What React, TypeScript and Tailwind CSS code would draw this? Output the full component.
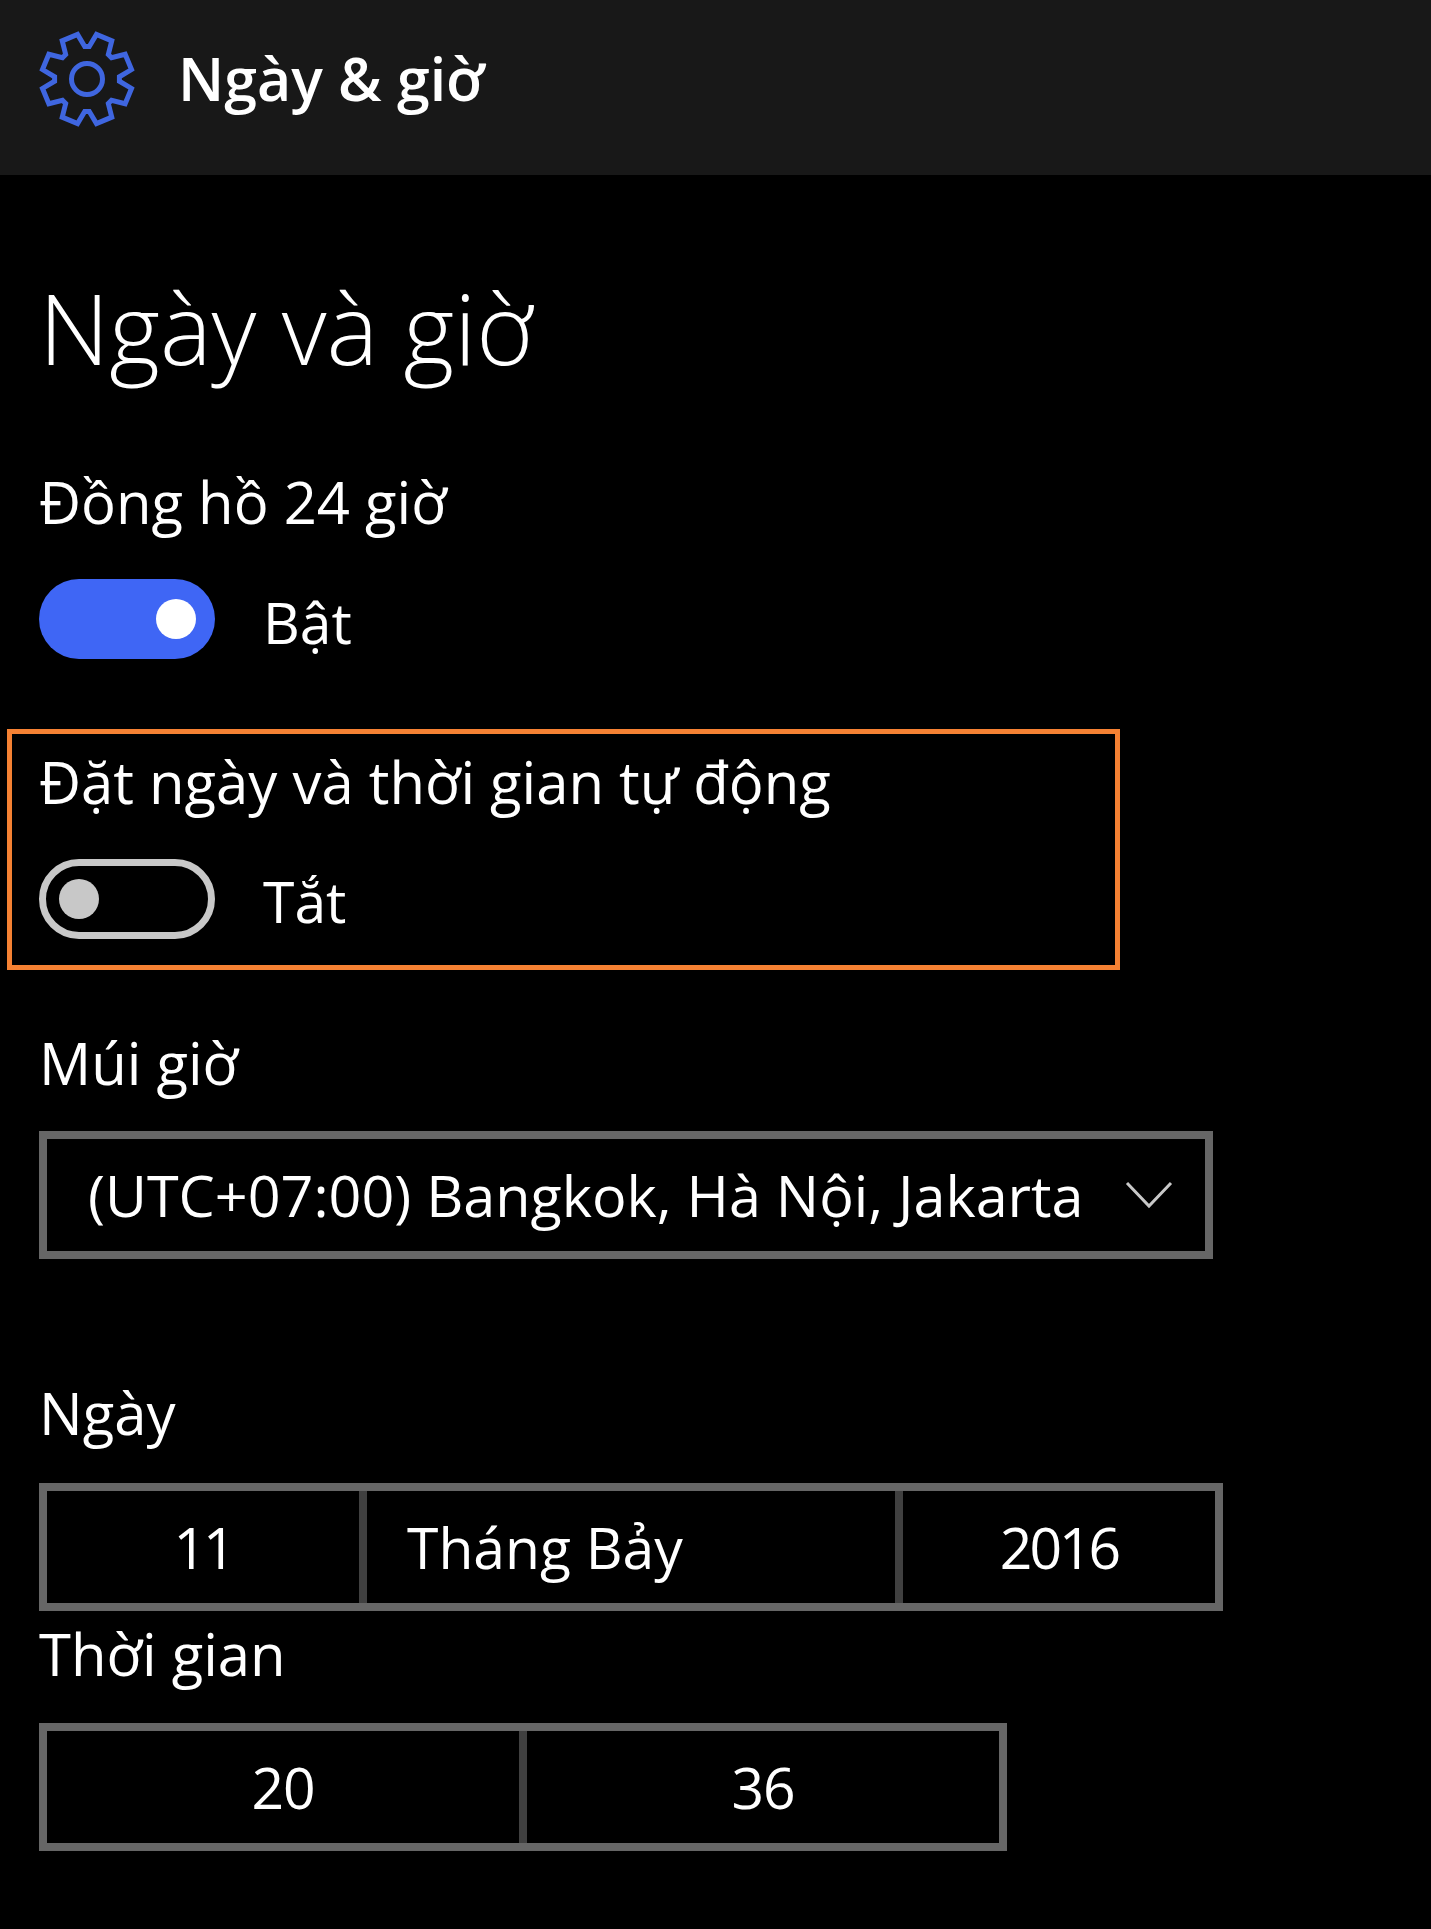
const font = "font-['Open_Sans','Noto_Sans',sans-serif]";

function Gear() {
  const cx = 48, cy = 48;
  const pts: string[] = [];
  const p = (r: number, deg: number) => {
    const t = ((deg - 90) * Math.PI) / 180;
    return `${(cx + r * Math.cos(t)).toFixed(2)},${(cy + r * Math.sin(t)).toFixed(2)}`;
  };
  for (let i = 0; i < 8; i++) {
    const c = 22.5 + i * 45;
    pts.push(p(32.5, c - 18.5));
    pts.push(p(45.5, c - 10.5));
    pts.push(p(45.5, c + 10.5));
    pts.push(p(32.5, c + 18.5));
  }
  return (
    <svg width="96" height="96" viewBox="0 0 96 96" className="shrink-0">
      <polygon points={pts.join(" ")} fill="none" stroke="#3f66e0" strokeWidth="5" />
      <circle cx="48" cy="48" r="15.5" fill="none" stroke="#3f66e0" strokeWidth="5" />
    </svg>
  );
}

function Label({ children, className = "" }: { children: React.ReactNode; className?: string }) {
  return <div className={`text-[58px] leading-[70px] text-white ${className}`}>{children}</div>;
}

function Cell({ children, className = "" }: { children: React.ReactNode; className?: string }) {
  return <div className={`flex items-center text-[57px] leading-none text-white ${className}`}>{children}</div>;
}

export default function App() {
  return (
    <div className={`min-h-[1929px] w-[1431px] bg-black ${font}`}>
      <header className="flex h-[175px] items-start bg-[#181818] pl-[39px] pt-[31px]">
        <Gear />
        <span className="ml-[43px] mt-[12px] text-[59px] font-[550] leading-[70px] text-white">Ngày &amp; giờ</span>
      </header>

      <main className="pl-[39px]">
        <h1 className="mt-[98px] text-[97.5px] font-light leading-[110px] text-white">Ngày và giờ</h1>

        <Label className="mt-[84px]">Đồng hồ 24 giờ</Label>
        <div className="mt-[42px] flex items-center">
          <div className="flex h-[80px] w-[176px] items-center justify-end rounded-full bg-[#3f66f5] pr-[19px]">
            <div className="h-[40px] w-[40px] rounded-full bg-white" />
          </div>
          <span className="ml-[48px] mt-[6px] text-[57px] leading-[70px] text-white">Bật</span>
        </div>

        <div className="ml-[-32px] mt-[70px] h-[241px] w-[1113px] border-[5px] border-[#f58133] pl-[27px]">
          <Label className="mt-[13px]">Đặt ngày và thời gian tự động</Label>
          <div className="mt-[42px] flex items-center">
            <div className="flex h-[80px] w-[176px] items-center rounded-full border-[7px] border-[#c8c8c8] pl-[13px]">
              <div className="h-[40px] w-[40px] rounded-full bg-[#c8c8c8]" />
            </div>
            <span className="ml-[48px] mt-[4px] text-[57px] leading-[70px] text-white">Tắt</span>
          </div>
        </div>

        <Label className="mt-[58px]">Múi giờ</Label>
        <div className="mt-[33px] flex h-[128px] w-[1174px] items-center justify-between border-[8px] border-[#666666] pl-[41px] pr-[32px]">
          <span className="text-[57.5px] leading-[70px] text-white">(UTC+07:00) Bangkok, Hà Nội, Jakarta</span>
          <svg width="48" height="28" viewBox="0 0 48 28">
            <path d="M2 2 L24 25 L46 2" fill="none" stroke="#c8c8c8" strokeWidth="3" />
          </svg>
        </div>

        <Label className="mt-[119px]">Ngày</Label>
        <div className="mt-[35px] flex h-[128px] w-[1184px] border-[8px] border-[#666666]">
          <Cell className="w-[320px] justify-center border-r-[8px] border-[#404040] tracking-[-3px]">11</Cell>
          <Cell className="w-[536px] border-r-[8px] border-[#404040] pl-[40px]">Tháng Bảy</Cell>
          <Cell className="flex-1 justify-center tracking-[-3px]">2016</Cell>
        </div>

        <Label className="mt-[8px]">Thời gian</Label>
        <div className="mt-[34px] flex h-[128px] w-[968px] border-[8px] border-[#666666]">
          <Cell className="w-[480px] justify-center border-r-[8px] border-[#404040] tracking-[-1px]">20</Cell>
          <Cell className="flex-1 justify-center tracking-[-1px]">36</Cell>
        </div>
      </main>
    </div>
  );
}
